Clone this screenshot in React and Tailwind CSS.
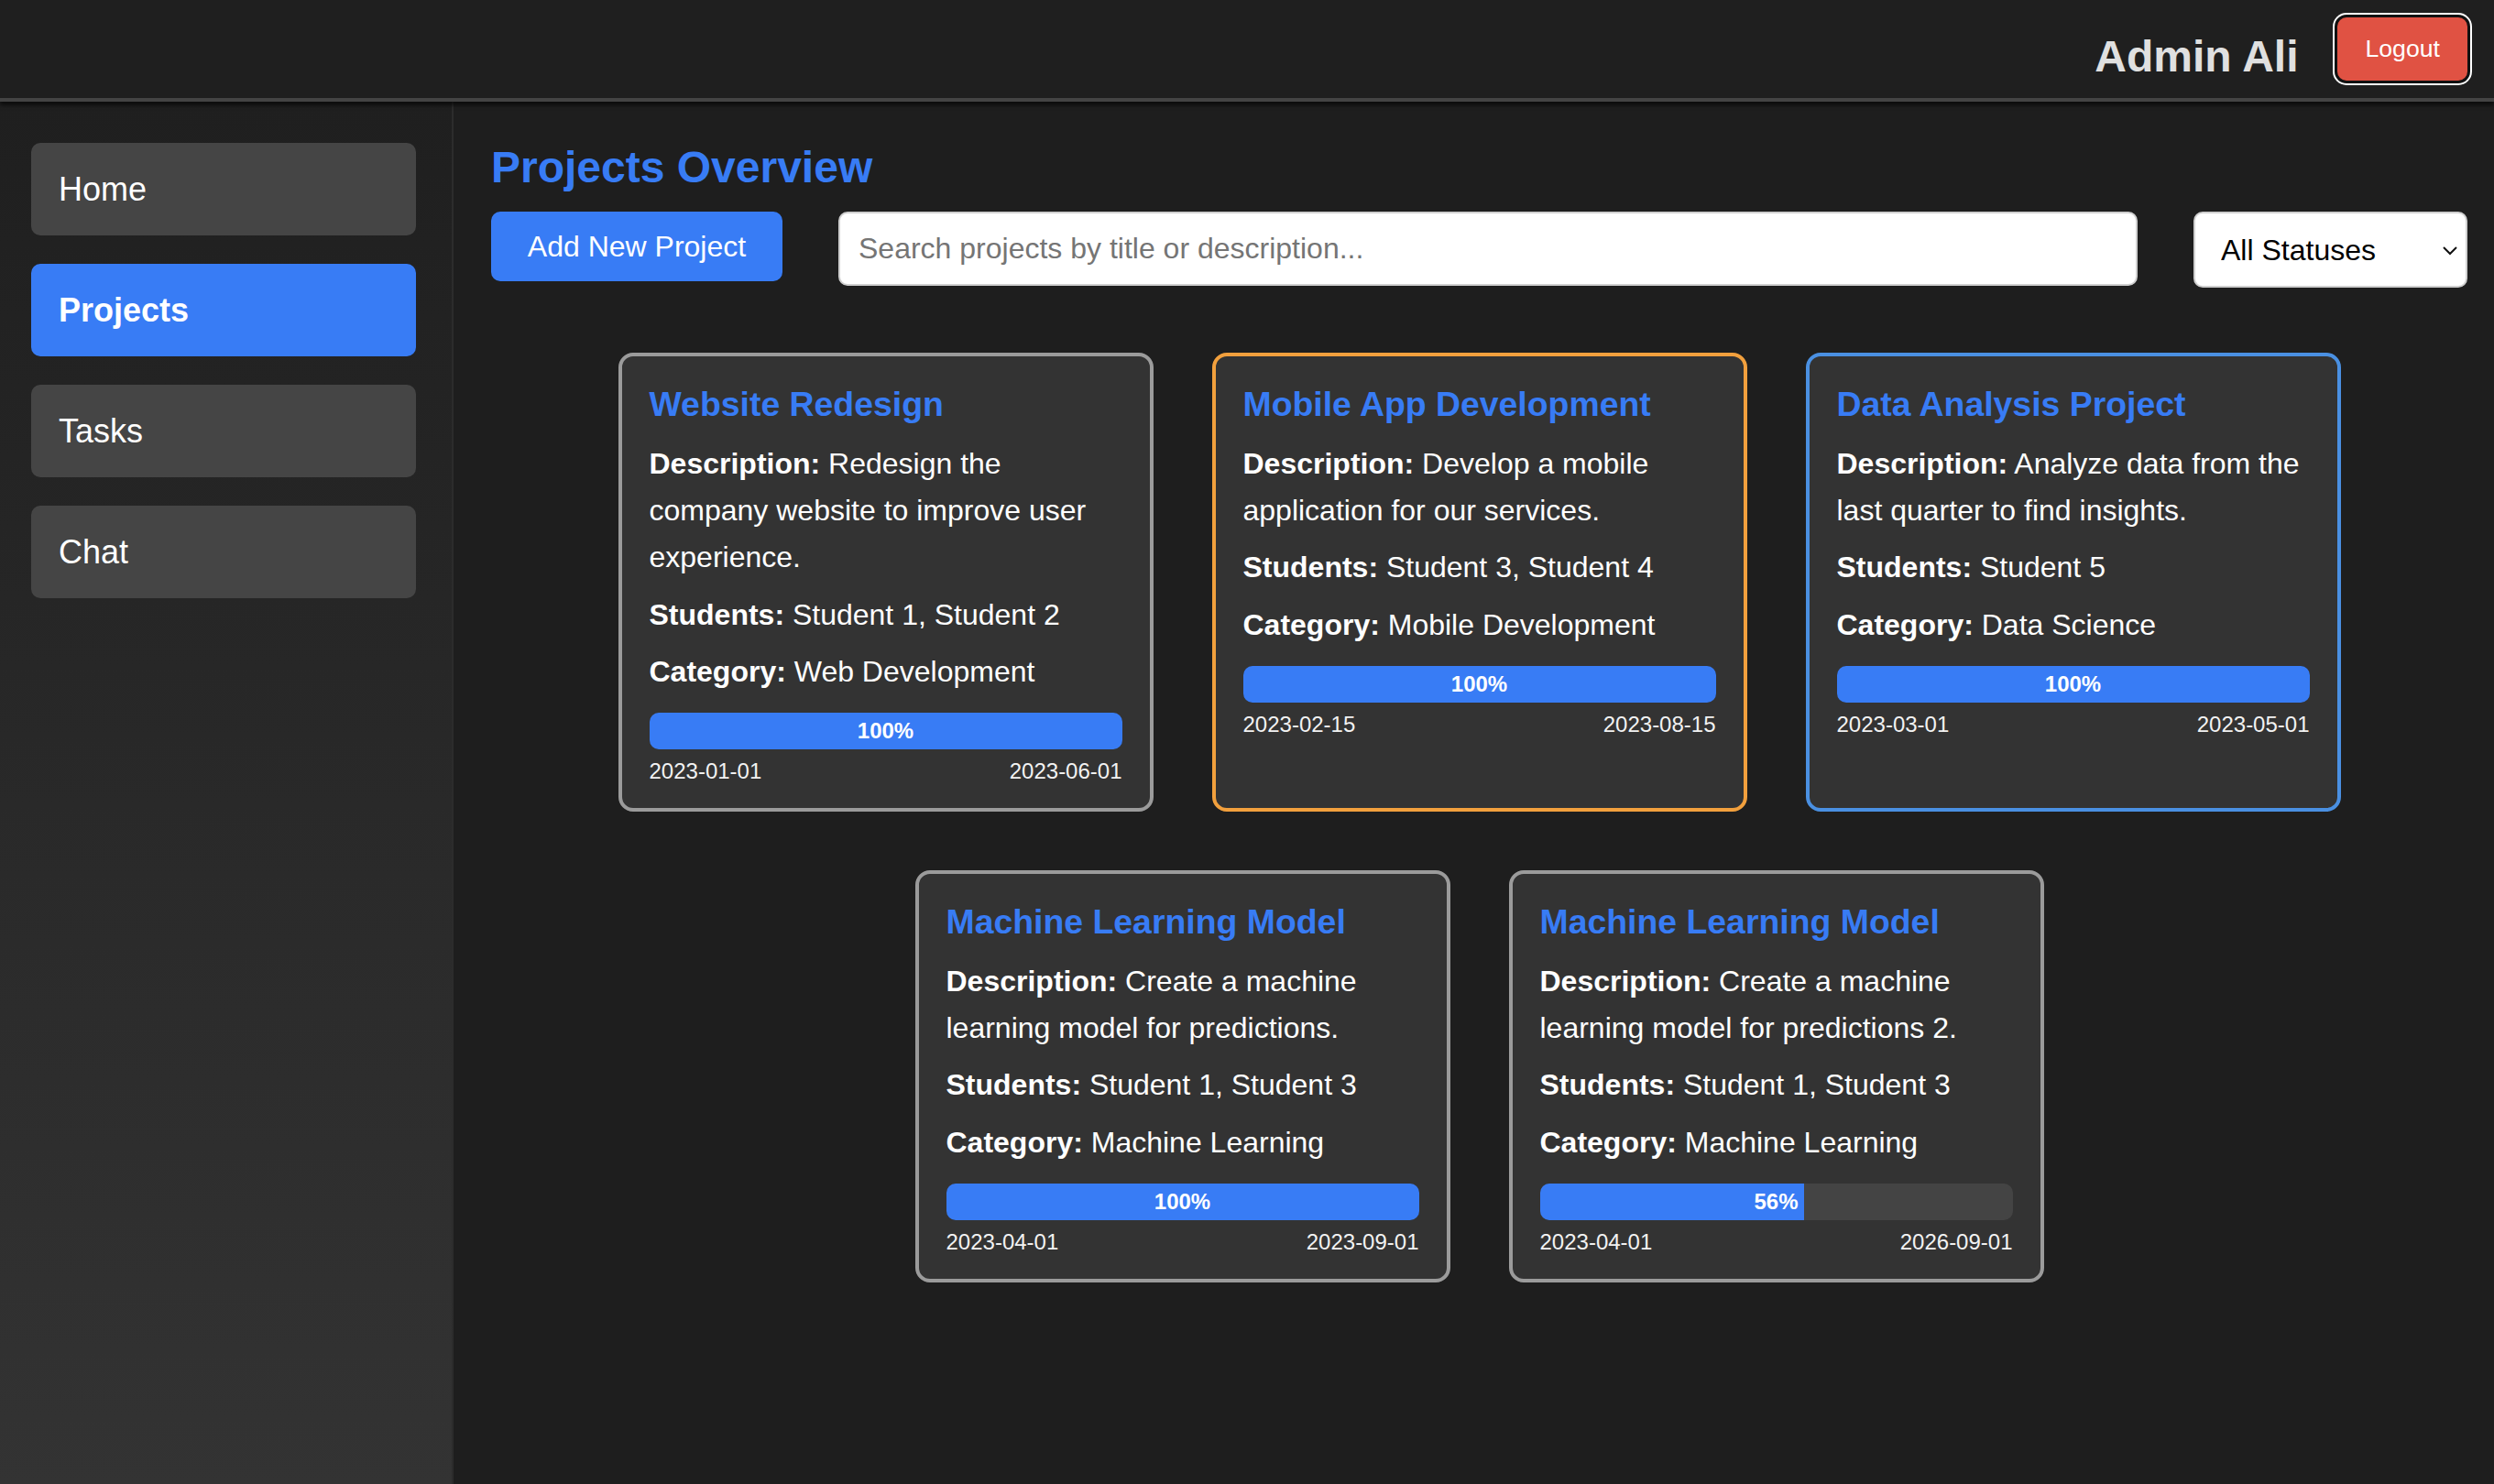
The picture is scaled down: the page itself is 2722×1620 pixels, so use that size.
import React, { useState } from 'react';

const navItems = ['Home', 'Projects', 'Tasks', 'Chat'];

const projects = [
  {
    id: 1,
    title: 'Website Redesign',
    description: 'Redesign the company website to improve user experience.',
    students: 'Student 1, Student 2',
    category: 'Web Development',
    progress: 100,
    start: '2023-01-01',
    end: '2023-06-01',
    border: 'border-[#9b9b9b]',
  },
  {
    id: 2,
    title: 'Mobile App Development',
    description: 'Develop a mobile application for our services.',
    students: 'Student 3, Student 4',
    category: 'Mobile Development',
    progress: 100,
    start: '2023-02-15',
    end: '2023-08-15',
    border: 'border-[#f2a03d]',
  },
  {
    id: 3,
    title: 'Data Analysis Project',
    description: 'Analyze data from the last quarter to find insights.',
    students: 'Student 5',
    category: 'Data Science',
    progress: 100,
    start: '2023-03-01',
    end: '2023-05-01',
    border: 'border-[#4a90e2]',
  },
  {
    id: 4,
    title: 'Machine Learning Model',
    description: 'Create a machine learning model for predictions.',
    students: 'Student 1, Student 3',
    category: 'Machine Learning',
    progress: 100,
    start: '2023-04-01',
    end: '2023-09-01',
    border: 'border-[#9b9b9b]',
  },
  {
    id: 5,
    title: 'Machine Learning Model',
    description: 'Create a machine learning model for predictions 2.',
    students: 'Student 1, Student 3',
    category: 'Machine Learning',
    progress: 56,
    start: '2023-04-01',
    end: '2026-09-01',
    border: 'border-[#9b9b9b]',
  },
];

function ProjectCard({ project }) {
  return (
    <div className={"m-[32px] w-[584px] rounded-[16px] border-4 bg-[#333] px-[30px] pt-[32px] pb-[26px] " + project.border}>
      <h3 className="mb-[20px] text-[37.4px] font-bold leading-[40px] text-[#387cf5]">{project.title}</h3>
      <p className="mb-[11px] text-[32px] leading-[51.2px] text-white">
        <strong>Description:</strong> {project.description}
      </p>
      <p className="mb-[11px] text-[32px] leading-[51.2px] text-white">
        <strong>Students:</strong> {project.students}
      </p>
      <p className="text-[32px] leading-[51.2px] text-white">
        <strong>Category:</strong> {project.category}
      </p>

      {/* progress bar */}
      <div className="mt-[19px] grid h-[40px] overflow-hidden rounded-[10px] bg-[#444]">
        <div className="col-start-1 row-start-1 h-full bg-[#387cf5]" style={{ width: project.progress + '%' }} />
        <span className="col-start-1 row-start-1 self-center text-center text-[24px] font-bold leading-[28px] text-white">
          {project.progress}%
        </span>
      </div>

      <div className="mt-[10px] flex justify-between text-[24px] leading-[28px] text-[#f2f2f2]">
        <span>{project.start}</span>
        <span>{project.end}</span>
      </div>
    </div>
  );
}

export default function App() {
  const [active, setActive] = useState('Projects');
  const [search, setSearch] = useState('');
  const [status, setStatus] = useState('all');

  return (
    <div className="flex min-h-screen flex-col bg-[#1e1e1e] font-['Liberation_Sans',Arial,sans-serif]">
      {/* Header */}
      <header className="relative z-10 flex h-[111px] shrink-0 items-center justify-end border-b-4 border-[#444] bg-[#1f1f1f] pr-[29px] shadow-[0_4px_4px_rgba(0,0,0,0.6)]">
        <h2 className="mr-[43px] pt-[16px] text-[48px] font-bold text-[#e0e0e0]">Admin Ali</h2>
        <button className="rounded-[10px] bg-[#e05243] px-[30px] py-[19px] text-[26.67px] leading-[31px] text-white shadow-[0_0_0_3px_#111,0_0_0_5px_#fff]">
          Logout
        </button>
      </header>

      <div className="flex flex-1">
        {/* Sidebar */}
        <aside className="w-[495px] shrink-0 border-r-2 border-[#2c2c2c] bg-linear-to-b from-[#1f1f1f] to-[#333] pt-[45px] pl-[34px] pr-[39px]">
          <ul className="flex flex-col gap-[31px]">
            {navItems.map(item => (
              <li key={item}>
                <a
                  href="#"
                  onClick={e => {
                    e.preventDefault();
                    setActive(item);
                  }}
                  className={
                    "flex h-[101px] items-center rounded-[10px] px-[30px] text-[36px] text-white " +
                    (active === item ? "bg-[#387cf5] font-bold" : "bg-[#454545]")
                  }
                >
                  {item}
                </a>
              </li>
            ))}
          </ul>
        </aside>

        {/* Main */}
        <main className="flex-1 pt-[44px] pl-[41px] pr-[29px]">
          <h1 className="text-[48px] font-bold leading-[55px] text-[#387cf5]">Projects Overview</h1>

          <div className="mt-[21px] flex items-start gap-[61px]">
            <button className="h-[76px] w-[318px] shrink-0 rounded-[10px] bg-[#387cf5] text-[32px] text-white">
              Add New Project
            </button>
            <input
              value={search}
              onChange={e => setSearch(e.target.value)}
              placeholder="Search projects by title or description..."
              className="h-[81px] min-w-0 flex-1 rounded-[10px] border-2 border-[#cfcfcf] bg-white px-[20px] text-[32px] text-black outline-none placeholder:text-[#757575]"
            />
            <div className="flex h-[83px] w-[299px] shrink-0 items-center rounded-[10px] border-2 border-[#cfcfcf] bg-white pr-[8px]">
              <select
                value={status}
                onChange={e => setStatus(e.target.value)}
                className="h-full min-w-0 flex-1 appearance-none bg-transparent pl-[28px] text-[32px] text-black outline-none"
              >
                <option value="all">All Statuses</option>
                <option value="completed">Completed</option>
                <option value="in-progress">In Progress</option>
              </select>
              <svg className="pointer-events-none h-[12px] w-[18px]" viewBox="0 0 18 12" fill="none">
                <path d="M2 3l7 7 7-7" stroke="#111" strokeWidth="2" />
              </svg>
            </div>
          </div>

          <div className="mt-[39px] flex flex-wrap justify-center">
            {projects.map(p => (
              <ProjectCard key={p.id} project={p} />
            ))}
          </div>
        </main>
      </div>
    </div>
  );
}
